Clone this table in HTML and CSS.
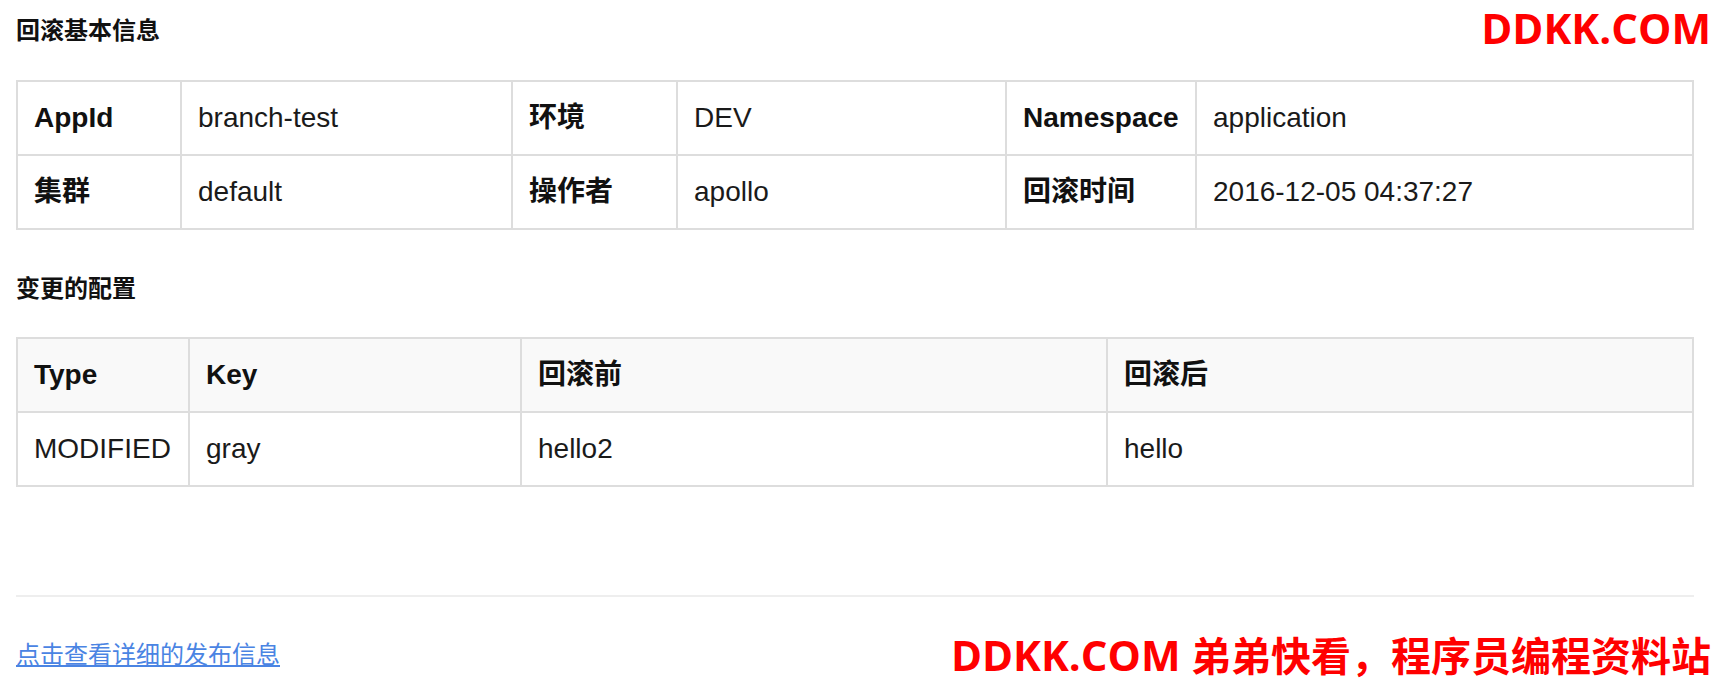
FILE: index.html
```html
<!DOCTYPE html>
<html lang="zh-CN">
<head>
  <meta charset="UTF-8" />
  <title>回滚详情</title>
  <link rel="stylesheet" href="styles.css">
</head>
<body>

  <!-- 回滚基本信息 -->
  <h4 class="section-title">回滚基本信息</h4>
  <table class="info-table">
    <colgroup>
      <col class="c-164"><col class="c-331"><col class="c-165"><col class="c-329"><col class="c-190"><col>
    </colgroup>
    <tr>
      <th>AppId</th>
      <td>branch-test</td>
      <th>环境</th>
      <td>DEV</td>
      <th>Namespace</th>
      <td>application</td>
    </tr>
    <tr>
      <th>集群</th>
      <td>default</td>
      <th>操作者</th>
      <td>apollo</td>
      <th>回滚时间</th>
      <td>2016-12-05 04:37:27</td>
    </tr>
  </table>

  <!-- 变更的配置 -->
  <h4 class="section-title second">变更的配置</h4>
  <table class="info-table change-table">
    <colgroup>
      <col class="c-172"><col class="c-332"><col class="c-586"><col>
    </colgroup>
    <thead>
      <tr>
        <th>Type</th>
        <th>Key</th>
        <th>回滚前</th>
        <th>回滚后</th>
      </tr>
    </thead>
    <tbody>
      <tr>
        <td>MODIFIED</td>
        <td>gray</td>
        <td>hello2</td>
        <td>hello</td>
      </tr>
    </tbody>
  </table>

  <hr class="divider">

  <div class="footer-row">
    <a class="release-link" href="#">点击查看详细的发布信息</a>
  </div>

  <div class="mark mark-top"><span class="mark-latin">DDKK.COM</span></div>
  <div class="mark mark-bottom"><span class="mark-latin">DDKK.COM</span> 弟弟快看，程序员编程资料站</div>

</body>
</html>
```

FILE: styles.css
```css
body {
  margin: 0;
  padding: 14px 20px 0 16px;
  background-color: #fff;
  color: #1a1a1a;
  font-family: 'Liberation Sans', Arial, 'Noto Sans CJK SC', sans-serif;
  font-size: 28px;
  position: relative;
  min-height: 678px;
  box-sizing: border-box;
}

.section-title {
  margin: 0 0 32px 0;
  font-size: 24px;
  line-height: 34px;
  font-weight: bold;
  color: #111;
}

.section-title.second {
  margin-top: 42px;
  margin-bottom: 31px;
}

/* taulukot */
.info-table {
  width: 100%;
  table-layout: fixed;
  border-collapse: separate;
  border-spacing: 0;
  border-top: 2px solid #ddd;
  border-left: 2px solid #ddd;
}

.info-table th,
.info-table td {
  padding: 16px;
  line-height: 40px;
  text-align: left;
  border-right: 2px solid #ddd;
  border-bottom: 2px solid #ddd;
  white-space: nowrap;
  overflow: hidden;
}

.info-table th {
  font-weight: bold;
  color: #111;
}

.info-table td {
  font-weight: normal;
}

.change-table thead th {
  background-color: #f9f9f9;
}

col.c-164 { width: 164px; }
col.c-331 { width: 331px; }
col.c-165 { width: 165px; }
col.c-329 { width: 329px; }
col.c-190 { width: 190px; }
col.c-172 { width: 172px; }
col.c-332 { width: 332px; }
col.c-586 { width: 586px; }

.divider {
  margin: 108px 0 0 0;
  border: 0;
  border-top: 2px solid #eee;
}

.footer-row {
  display: flex;
  align-items: center;
  padding-top: 41px;
}

.release-link {
  font-size: 24px;
  line-height: 34px;
  color: #4a84e3;
  text-decoration: underline;
}

/* vesileima */
.mark {
  position: absolute;
  right: 3px;
  color: #ff0000;
  font-family: 'Open Sans', 'Noto Sans CJK SC', sans-serif;
  font-weight: bold;
  font-size: 40px;
  line-height: 40px;
  white-space: nowrap;
}

.mark-latin {
  font-size: 42px;
}

.mark-top {
  top: 8px;
}

.mark-bottom {
  top: 635px;
}
```
